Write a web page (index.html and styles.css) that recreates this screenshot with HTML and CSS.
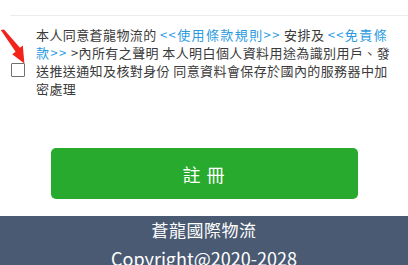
FILE: index.html
```html
<!DOCTYPE html>
<html lang="zh-Hant">
<head>
<meta charset="utf-8">
<link rel="stylesheet" href="styles.css">
</head>
<body>
<div class="page">
  <div class="divider"></div>
  <div class="agree">
    <span class="check"></span>
    <p class="terms">本人同意蒼龍物流的 <a class="link">&lt;&lt;使用條款規則&gt;&gt;</a> 安排及 <a class="link">&lt;&lt;免責條款&gt;&gt;</a> &gt;內所有之聲明 本人明白個人資料用途為識別用戶、發送推送通知及核對身份 同意資料會保存於國內的服務器中加密處理</p>
  </div>
  <svg class="arrow" width="30" height="70" viewBox="0 0 30 70">
    <path d="M0.8 30 L4 29.6 L20 47.8 L22.8 45.6 L24.4 63.6 L12.2 54.2 L15.6 51.8 Z" fill="#f2231b"/>
  </svg>
  <div class="actions">
    <button class="submit">註 冊</button>
  </div>
  <footer class="footer">
    <div class="brand">蒼龍國際物流</div>
    <div class="copy">Copyright@2020-2028</div>
  </footer>
</div>
</body>
</html>
```
FILE: styles.css
```css
html, body {
  margin: 0;
  padding: 0;
  background: #fff;
}
body {
  font-family: "Noto Sans CJK TC", "Noto Sans", sans-serif;
  width: 408px;
  height: 265px;
  overflow: hidden;
}
.page {
  position: relative;
  padding-top: 15px;
}
.divider {
  height: 1px;
  background: #ececec;
  margin-left: 10px;
}
.agree {
  display: flex;
  align-items: flex-start;
  padding: 10px 12px 0 11px;
}
.check {
  flex: none;
  width: 12px;
  height: 12px;
  border: 1px solid #707070;
  border-radius: 1px;
  margin-top: 37px;
  margin-right: 11px;
}
.terms {
  margin: 0;
  font-size: 13px;
  line-height: 18px;
  letter-spacing: 0.4px;
  color: #3a3a3a;
  word-break: break-all;
}
.link {
  color: #2a9be0;
  letter-spacing: 1.4px;
}
.arrow {
  position: absolute;
  left: 0;
  top: 0;
}
.actions {
  display: flex;
  justify-content: center;
  padding-top: 50px;
}
.submit {
  width: 307px;
  height: 51px;
  border: none;
  border-radius: 5px;
  background: #27aa2d;
  color: #fff;
  font-family: "Noto Sans CJK TC", sans-serif;
  font-size: 18px;
  letter-spacing: 1px;
}
.footer {
  margin-top: 17px;
  background: #4a5a72;
  color: #fff;
  text-align: center;
  padding-top: 1px;
}
.brand {
  font-size: 17px;
  line-height: 26px;
  letter-spacing: 0.5px;
}
.copy {
  font-size: 18px;
  line-height: 30px;
}
```
